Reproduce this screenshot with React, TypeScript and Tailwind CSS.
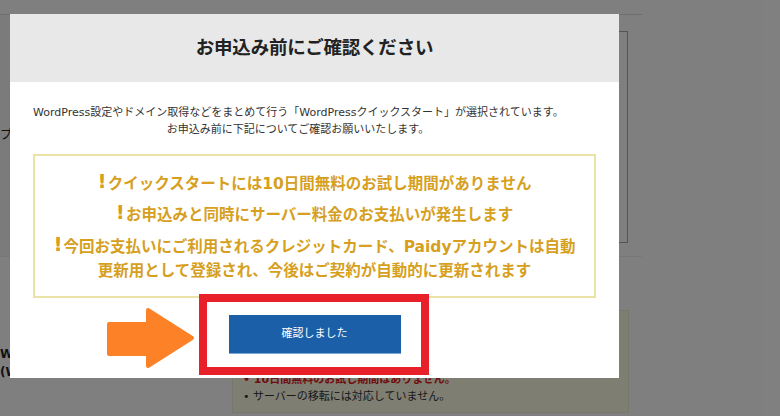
import React from "react";

const jp = { fontFamily: '"DejaVu Sans", "Noto Sans CJK JP", sans-serif' };

function Arrow() {
  return (
    <svg width="92" height="64" viewBox="0 0 92 64" className="absolute left-[105px] top-[306px]">
      <polygon
        points="4,18 43,18 43,4 87,32 43,60 43,48 4,48"
        fill="#fd8126"
        stroke="#fd8126"
        strokeWidth="4"
        strokeLinejoin="round"
      />
    </svg>
  );
}

function Bang() {
  return <span className="inline-block leading-[0] text-[20px] font-black mr-[1px] align-[1px]">!</span>;
}

export default function App() {
  return (
    <div className="relative w-[780px] h-[416px] overflow-hidden bg-white text-[#222]" style={jp}>
      {/* page behind the dialog */}
      <div className="w-[642px] flex flex-col">
        <div className="h-[15px] border-b border-[#dcdcdc]" />
        <div className="h-[241px] flex">
          <div className="w-[10px] bg-[#f6f6f6] pt-[112px] text-[12px] leading-[16px] whitespace-nowrap overflow-visible">
            プラン
          </div>
          <div className="ml-auto mr-[14px] mt-[16px] w-[300px] h-[212px] border border-[#a8a8a8]" />
        </div>
        <div className="h-px bg-[#eeeeee]" />
        <div className="flex h-[160px]">
          <div className="w-[10px] pt-[88px] text-[12px] leading-[18px] font-bold whitespace-nowrap">
            <div>WordPress</div>
            <div>(WordPress)</div>
          </div>
          <div className="ml-[222px] mr-[13px] mt-[53px] h-[103px] flex-1 bg-[#fefce6] border border-[#eeeed6] pl-[10px] pt-[60px] text-[11px] leading-[17px]">
            <div className="text-[#e01a1a] font-bold">• 10日間無料のお試し期間はありません。</div>
            <div className="text-[#333]">• サーバーの移転には対応していません。</div>
          </div>
        </div>
      </div>

      {/* dim overlay */}
      <div className="absolute inset-0 bg-black/50" />

      {/* dialog */}
      <div className="absolute left-[10px] top-[14px] w-[609px] h-[364px] bg-white flex flex-col">
        <div className="h-[68px] bg-[#e8e8e8] flex items-center justify-center">
          <h2 className="text-[18.5px] font-bold text-[#222] tracking-[-0.2px]">お申込み前にご確認ください</h2>
        </div>
        <div className="pt-[22px]">
          <p className="ml-[23px] mr-[56px] text-center text-[11px] leading-[17px] text-[#333] whitespace-nowrap">
            WordPress設定やドメイン取得などをまとめて行う「WordPressクイックスタート」が選択されています。
            <br />
            お申込み前に下記についてご確認お願いいたします。
          </p>
          <div className="mx-[23px] mt-[16px] h-[144px] border-2 border-[#ebe2a6] pt-[16px] text-center font-bold text-[15.5px] leading-[24px] text-[#d6a01e] whitespace-nowrap">
            <p className="h-[24px]">
              <Bang />クイックスタートには10日間無料のお試し期間がありません
            </p>
            <p className="mt-[7px] h-[24px]">
              <Bang />お申込みと同時にサーバー料金のお支払いが発生します
            </p>
            <p className="mt-[8px] h-[48px]">
              <Bang />今回お支払いにご利用されるクレジットカード、Paidyアカウントは自動
              <br />
              更新用として登録され、今後はご契約が自動的に更新されます
            </p>
          </div>
          <div className="mt-[17px] flex justify-center">
            <button className="w-[172px] h-[39px] bg-[#1b5fa9] border-b border-[#79a7da] text-white text-[11px]">
              確認しました
            </button>
          </div>
        </div>
      </div>

      {/* annotations */}
      <Arrow />
      <div className="absolute left-[199px] top-[294px] w-[230px] h-[81px] border-[8px] border-[#e8202a]" />
    </div>
  );
}
